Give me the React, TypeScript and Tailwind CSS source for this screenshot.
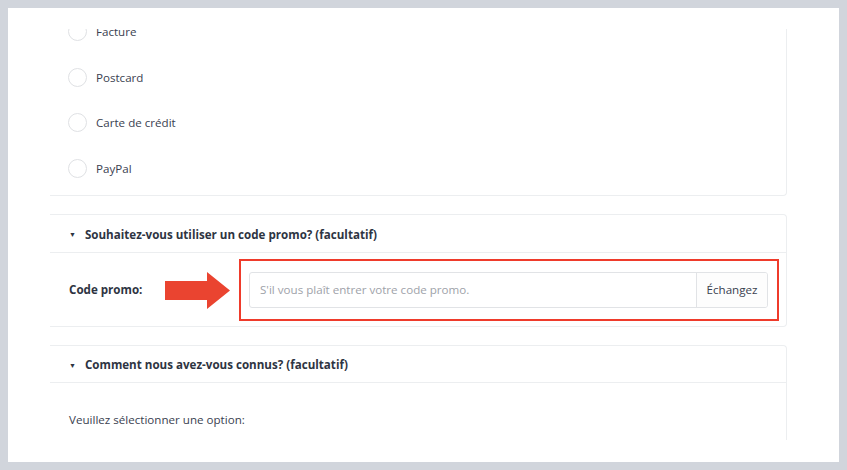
import React from "react";

const font = { fontFamily: '"Open Sans", "Liberation Sans", sans-serif' };

function Radio({ label }: { label: string }) {
  return (
    <div className="flex h-[45.5px] items-center pl-[18px]">
      <span className="h-[19px] w-[19px] shrink-0 rounded-full border border-[#dfe1e4] bg-white" />
      <span className="ml-[9px] text-[11.6px] text-[#3a4150]">{label}</span>
    </div>
  );
}

function Header({ title, h }: { title: string; h: string }) {
  return (
    <div className={h}>
      <div className="flex h-full items-center border-b border-[#eceef0] pt-[2px] pl-[19px] text-[11.6px] font-bold text-[#2e3442]">
        <span className="mr-[9px] text-[7px] leading-none">▼</span>
        {title}
      </div>
    </div>
  );
}

export default function App() {
  return (
    <div className="h-[470px] w-[847px] bg-[#d1d5dc] pt-2 pl-2" style={font}>
      <div className="h-[454px] w-[831px] bg-white pt-[21px]">
        <div className="ml-[42px] h-[411px] w-[737px] overflow-hidden">
          {/* payment methods */}
          <div className="-mt-[20px] rounded-br border-r border-b border-[#eceef0] pb-[4px]">
            <Radio label="Facture" />
            <Radio label="Postcard" />
            <Radio label="Carte de crédit" />
            <Radio label="PayPal" />
          </div>

          {/* promo code */}
          <div className="mt-[18px] rounded-r border-t border-r border-b border-[#eceef0]">
            <Header h="h-[38px]" title="Souhaitez-vous utiliser un code promo? (facultatif)" />
            <div className="flex h-[73px] items-center pt-[1px]">
              <span className="ml-[19px] w-[96px] text-[11.6px] font-bold text-[#2e3442]">Code promo:</span>
              <svg width="66" height="37" viewBox="0 0 66 37">
                <path d="M0 9 H42 V0 L65 18.5 L42 37 V28 H0 Z" fill="#ea4430" />
              </svg>
              <div className="ml-[8px] flex h-[62px] w-[540px] items-center border-2 border-[#ef3b2b] pr-[9px] pl-[8px]">
                <div className="flex h-[36px] flex-1 overflow-hidden rounded-[3px] border border-[#e1e3e6]">
                  <div className="flex flex-1 items-center pl-[10px] text-[11.6px] text-[#9ea2a9]">
                    S'il vous plaît entrer votre code promo.
                  </div>
                  <div className="flex w-[71px] items-center justify-center border-l border-[#e1e3e6] bg-[#fdfdfd] text-[11.6px] text-[#3a4150]">
                    Échangez
                  </div>
                </div>
              </div>
            </div>
          </div>

          {/* referral */}
          <div className="mt-[18px] rounded-tr border-t border-r border-[#eceef0]">
            <Header h="h-[37px]" title="Comment nous avez-vous connus? (facultatif)" />
            <div className="h-[80px] pt-[28px] pl-[19px] text-[11.6px] text-[#3a4150]">
              Veuillez sélectionner une option:
            </div>
          </div>
        </div>
      </div>
    </div>
  );
}
